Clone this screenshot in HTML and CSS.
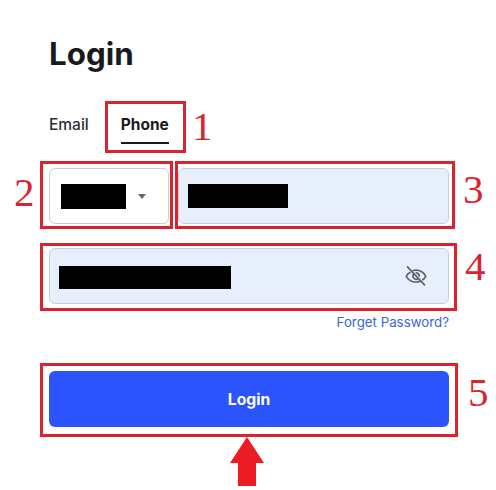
FILE: index.html
```html
<!DOCTYPE html>
<html lang="en">
<head>
<meta charset="utf-8">
<title>Login</title>
<link rel="stylesheet" href="styles.css">
</head>
<body>
<main class="page">
  <h1 class="title">Login</h1>
  <div class="tabs">
    <span class="tab">Email</span>
    <span class="tab tab-active">Phone</span>
  </div>
  <div class="phone-row">
    <div class="field select">
      <span class="mask mask-code"></span>
      <span class="caret"></span>
    </div>
    <div class="field input">
      <span class="mask mask-phone"></span>
    </div>
  </div>
  <div class="field input password">
    <span class="mask mask-pass"></span>
    <svg class="eye" viewBox="0 0 24 24" width="24" height="24" fill="none" stroke="#5f6368" stroke-width="1.7" stroke-linecap="round" stroke-linejoin="round">
      <path d="M6 8.500C4.300 9.500 3 10.800 2.200 12.300c1.800 3.200 5.400 5.700 9.800 5.700 1.500 0 2.900-.3 4.100-.8"/>
      <path d="M9.200 6.500c.9-.2 1.800-.4 2.800-.4 4.400 0 8 2.600 9.800 6.200-.7 1.300-1.700 2.500-3 3.400"/>
      <path d="M9.200 10.400A3.400 3.400 0 0 0 13.600 15"/>
      <path d="M12.300 8.800a3.400 3.400 0 0 1 3 3"/>
      <path d="M3.500 2.800l17 18"/>
    </svg>
  </div>
  <div class="forgot-row"><a class="forgot" href="#">Forget Password?</a></div>
  <button class="submit" type="button">Login</button>
</main>

<div class="box box-1"></div>
<div class="box box-2"></div>
<div class="box box-3"></div>
<div class="box box-4"></div>
<div class="box box-5"></div>
<span class="num num-1">1</span>
<span class="num num-2">2</span>
<span class="num num-3">3</span>
<span class="num num-4">4</span>
<span class="num num-5">5</span>
<svg class="arrow" viewBox="0 0 34 49" width="34" height="49"><path d="M17 0L34 26H26V49H8V26H0Z" fill="#ed1c24"/></svg>
</body>
</html>
```
FILE: styles.css
```css
* { box-sizing: border-box; }
html, body { margin: 0; padding: 0; background: #fff; }
body { width: 496px; height: 490px; overflow: hidden; position: relative; font-family: Inter, "Liberation Sans", sans-serif; }

.page { padding: 36px 47px 0 49px; }
.title { margin: 0; font-size: 31.3px; line-height: 36px; font-weight: 700; color: #181a20; }

.tabs { display: flex; gap: 32px; margin-top: 33px; height: 39px; }
.tab { font-size: 15.5px; line-height: 40px; font-weight: 500; color: #2b2f36; height: 39px; }
.tab-active { font-weight: 700; color: #181a20; border-bottom: 2px solid #181a20; }

.phone-row { display: flex; gap: 9px; margin-top: 24px; }
.field { height: 56px; border-radius: 6px; border: 1px solid #c9ced6; display: flex; align-items: center; }
.select { width: 120px; padding-left: 11px; background: #fff; }
.input { background: #e8effc; }
.phone-row .input { flex: 1; padding-left: 9px; }
.mask { display: block; background: #000; }
.mask-code { width: 65px; height: 25px; }
.caret { margin-left: 12px; margin-top: 1px; width: 0; height: 0; border-left: 4px solid transparent; border-right: 4px solid transparent; border-top: 5px solid #666; }
.mask-phone { width: 100px; height: 24px; }

.password { margin-top: 24px; padding: 3px 20px 0 9px; justify-content: space-between; }
.mask-pass { width: 172px; height: 23px; }
.eye { display: block; margin-top: -3px; }

.forgot-row { display: flex; justify-content: flex-end; margin-top: 9px; height: 18px; }
.forgot { font-size: 13.3px; line-height: 18px; color: #3d64d8; text-decoration: none; }

.submit { display: block; width: 400px; height: 56px; margin-top: 40px; border: 0; border-radius: 6px; background: #2b54fd; color: #fff; font: 700 15.7px Inter, "Liberation Sans", sans-serif; }

.box { position: absolute; border: 3px solid #d9232e; }
.box-1 { left: 105px; top: 101px; width: 81px; height: 52px; }
.box-2 { left: 40px; top: 161px; width: 133px; height: 68px; }
.box-3 { left: 175px; top: 161px; width: 280px; height: 68px; }
.box-4 { left: 40px; top: 243px; width: 417px; height: 68px; }
.box-5 { left: 40px; top: 363px; width: 418px; height: 74px; }

.num { position: absolute; font-family: "Liberation Serif", serif; font-size: 41px; line-height: 41px; color: #d9232e; }
.num-1 { left: 192px; top: 106px; }
.num-2 { left: 14px; top: 172px; }
.num-3 { left: 463px; top: 169px; }
.num-4 { left: 465px; top: 246px; }
.num-5 { left: 468px; top: 372px; }

.arrow { position: absolute; left: 230px; top: 437px; display: block; }
```
